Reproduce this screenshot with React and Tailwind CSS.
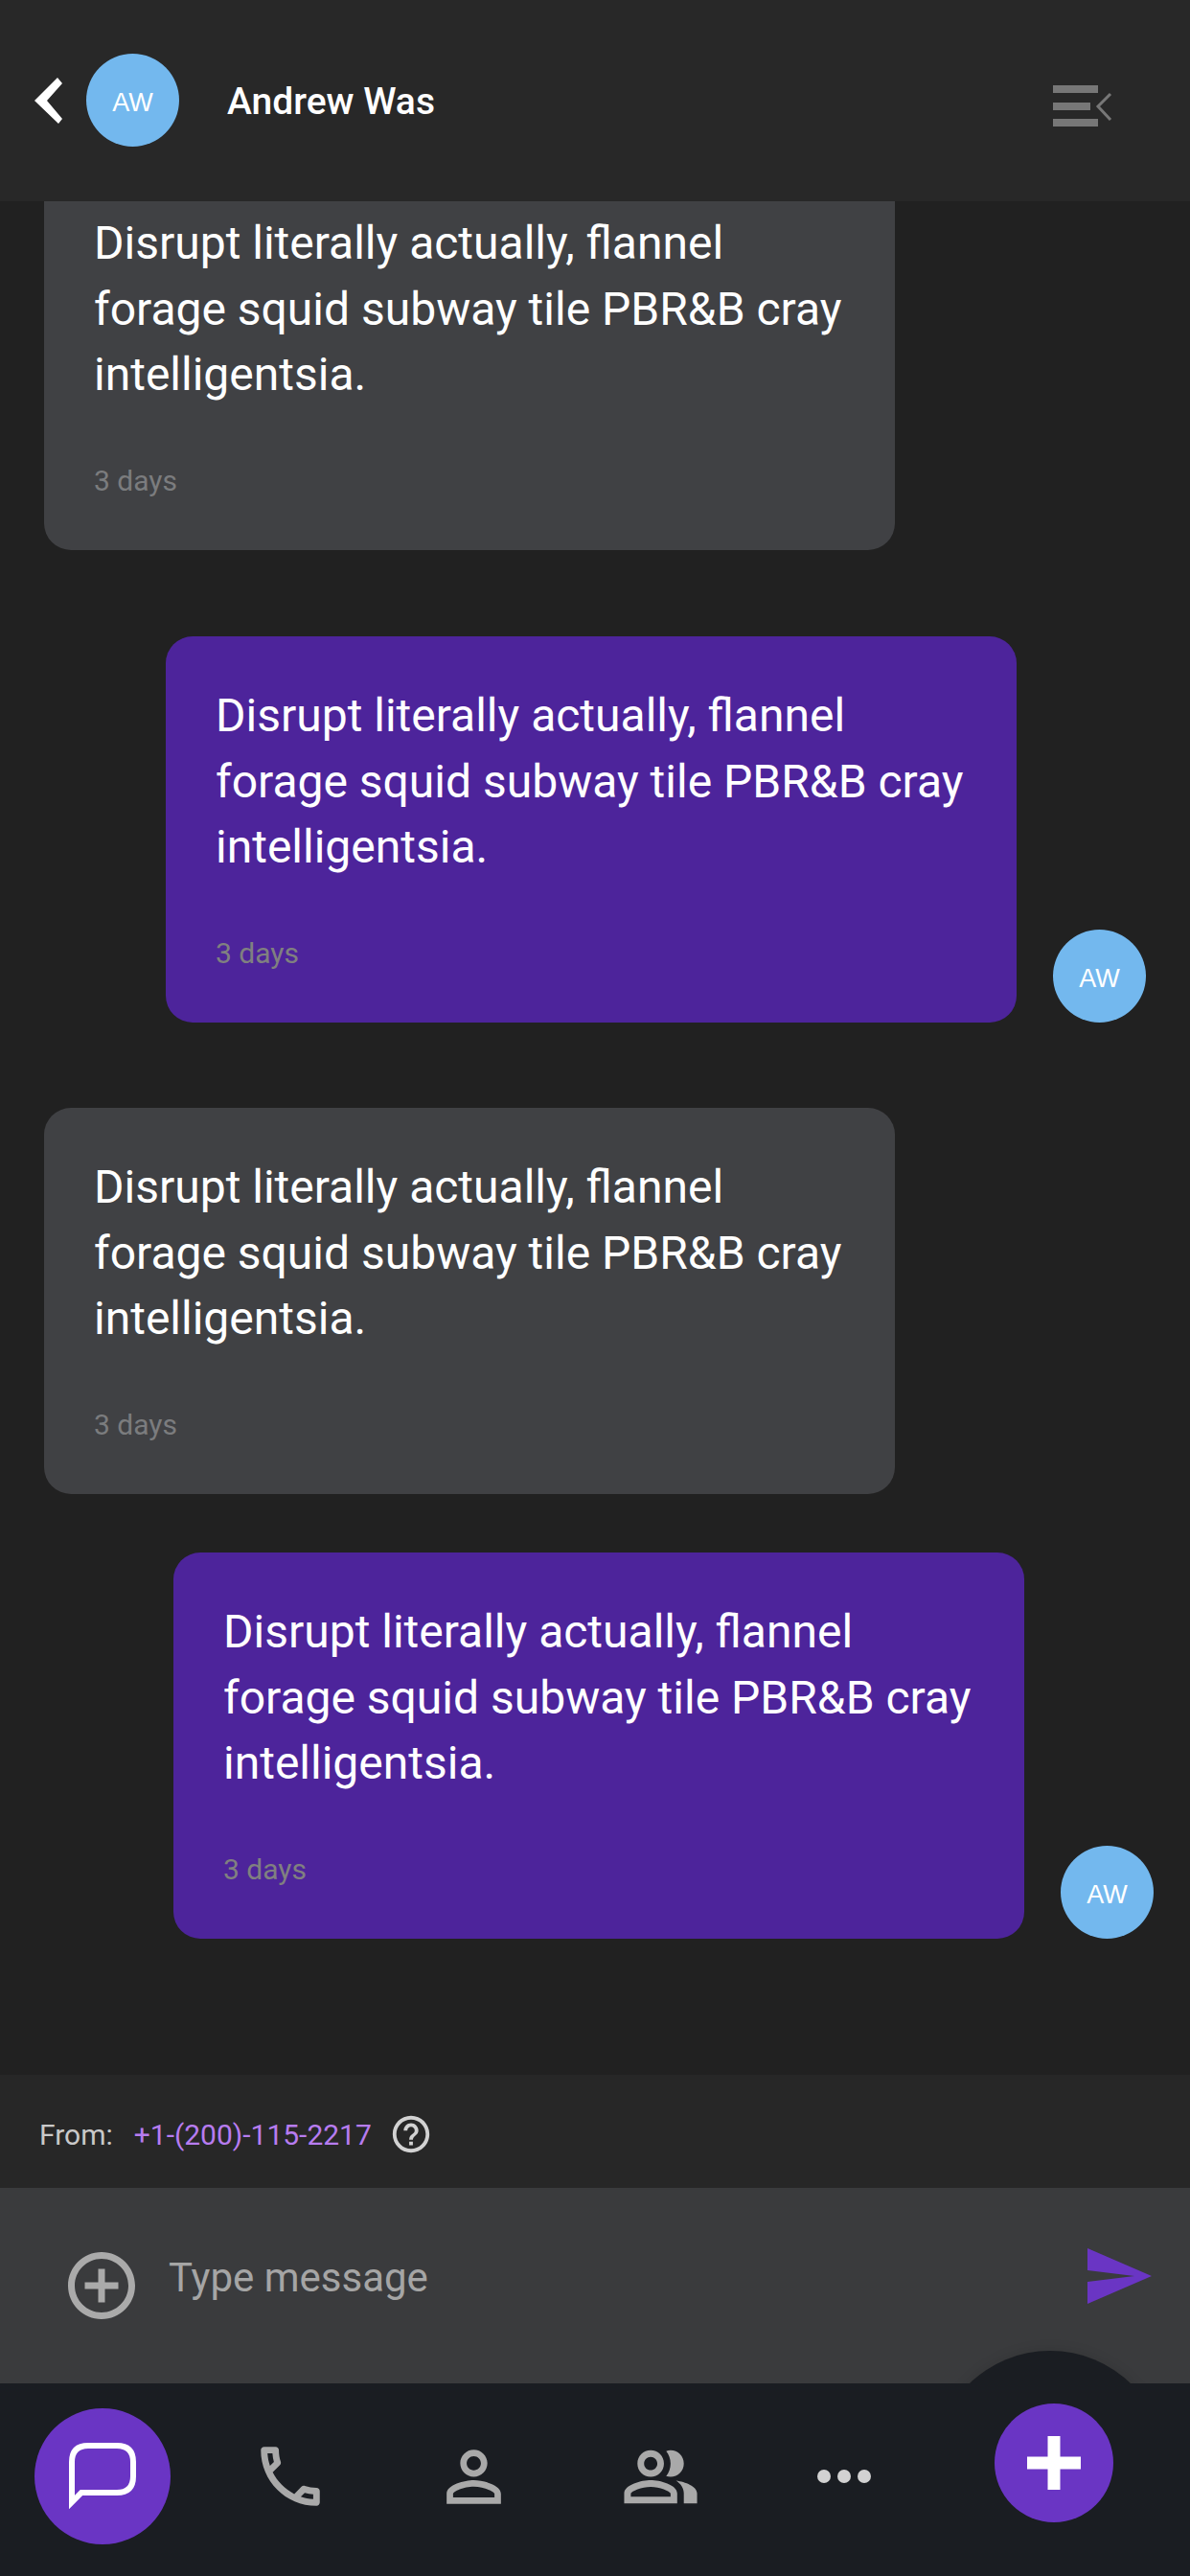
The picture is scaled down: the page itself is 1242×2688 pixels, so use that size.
import React from 'react';

const TEXT = 'Disrupt literally actually, flannel forage squid subway tile PBR&B cray intelligentsia.';

function Avatar({ className = '' }) {
    return (
        <div className={`w-[97px] h-[97px] shrink-0 rounded-full bg-[#73b8ee] flex items-center justify-center pt-[5px] text-white text-[27px] font-['Liberation_Sans',sans-serif] ${className}`}>
            AW
        </div>
    );
}

function Bubble({ mine }) {
    return (
        <div className={`w-[888px] h-[403px] shrink-0 rounded-[28px] pl-[52px] pr-[50px] pt-[49px] ${mine ? 'bg-[#4d249b]' : 'bg-[#404144]'}`}>
            <p className="text-white text-[48px] leading-[68.6px]">{TEXT}</p>
            <p className={`mt-[56px] text-[30px] leading-[40px] ${mine ? 'text-[#808080]' : 'text-[#7b7c7e]'}`}>3 days</p>
        </div>
    );
}

function NavIcon({ size, viewBox = '0 0 24 24', className = '', fill = '#a9a9a9', d }) {
    return (
        <svg width={size} height={size} viewBox={viewBox} fill={fill} className={`shrink-0 ${className}`}>
            <path d={d} />
        </svg>
    );
}

export default function App() {
    return (
        <div className="w-[1242px] h-[2688px] flex flex-col overflow-hidden bg-[#212121] font-['Roboto',sans-serif]">
            {/* Header */}
            <header className="h-[210px] shrink-0 bg-[#282828] flex items-center pb-[1px] z-10">
                <svg width="30" height="48" viewBox="0 0 30 48" className="ml-[36px] shrink-0">
                    <polygon points="24,0 29,6 13,24 29,43 25,48 0,24" fill="#fff" />
                </svg>
                <Avatar className="ml-[24px]" />
                <span className="ml-[50px] mt-[4px] text-white text-[39px] font-medium">Andrew Was</span>
                <svg width="62" height="44" viewBox="0 0 62 44" className="ml-auto mr-[81px] mt-[12px] shrink-0">
                    <rect x="0" y="0" width="47" height="8" fill="#777" />
                    <rect x="0" y="18" width="39" height="8" fill="#777" />
                    <rect x="0" y="35" width="47" height="8" fill="#777" />
                    <path d="M60 9 L47 22 L60 36" fill="none" stroke="#777" strokeWidth="3" />
                </svg>
            </header>

            {/* Messages */}
            <main className="flex-1 min-h-0 overflow-hidden flex flex-col">
                <div className="pl-[46px] mt-[-39px]"><Bubble /></div>
                <div className="pl-[173px] mt-[90px] flex items-end gap-[38px]"><Bubble mine /><Avatar /></div>
                <div className="pl-[46px] mt-[89px]"><Bubble /></div>
                <div className="pl-[181px] mt-[61px] flex items-end gap-[38px]"><Bubble mine /><Avatar /></div>
            </main>

            {/* From line */}
            <div className="h-[118px] shrink-0 bg-[#272727] flex items-center pl-[41px] pt-[6px] text-[30px]">
                <span className="text-[#c9c9c9]">From:</span>
                <span className="ml-[22px] text-[#b77cf0]">+1-(200)-115-2217</span>
                <NavIcon
                    size={46}
                    fill="#d2d2d2"
                    className="ml-[18px]"
                    d="M11 18h2v-2h-2v2zm1-16C6.48 2 2 6.48 2 12s4.48 10 10 10 10-4.48 10-10S17.52 2 12 2zm0 18c-4.41 0-8-3.59-8-8s3.59-8 8-8 8 3.59 8 8-3.59 8-8 8zm0-14c-2.21 0-4 1.79-4 4h2c0-1.1.9-2 2-2s2 .9 2 2c0 2-3 1.75-3 5h2c0-2.25 3-2.5 3-5 0-2.21-1.79-4-4-4z"
                />
            </div>

            {/* Input */}
            <div className="h-[204px] shrink-0 bg-[#3a3b3d] flex items-start">
                <NavIcon
                    size={84}
                    fill="#aaaaaa"
                    className="ml-[64px] mt-[60px]"
                    d="M13 7h-2v4H7v2h4v4h2v-4h4v-2h-4V7zm-1-5C6.48 2 2 6.48 2 12s4.48 10 10 10 10-4.48 10-10S17.52 2 12 2zm0 18c-4.41 0-8-3.59-8-8s3.59-8 8-8 8 3.59 8 8-3.59 8-8 8z"
                />
                <span className="ml-[28px] mt-[67px] text-[42px] leading-[54px] text-[#a5a5a5]">Type message</span>
                <svg width="68" height="58" viewBox="0 0 68 58" className="ml-auto mr-[39px] mt-[63px] shrink-0">
                    <path d="M0 0 L67 29 L0 58 V35 L49 29 L0 23 Z" fill="#6a35c4" />
                </svg>
            </div>

            {/* Bottom nav */}
            <nav className="relative h-[201px] shrink-0 bg-[#1a1d22] flex items-center pb-[7px]">
                <div className="absolute left-[975px] top-[-34px] w-[242px] h-[242px] rounded-full bg-[#1a1d22] shadow-[0_0_14px_rgba(0,0,0,0.12)]" />
                <div className="absolute inset-0 top-0 bg-[#1a1d22]" />
                <div className="relative ml-[36px] w-[142px] h-[142px] shrink-0 rounded-full bg-[#6a35c4] flex items-center justify-center">
                    <svg width="70" height="70" viewBox="0 0 70 70">
                        <path d="M3 62 V20 Q3 3 20 3 H50 Q67 3 67 20 V35 Q67 52 50 52 H13 Z" fill="none" stroke="#fff" strokeWidth="6" strokeLinejoin="miter" />
                    </svg>
                </div>
                <NavIcon
                    size={82}
                    className="relative ml-[84px]"
                    d="M6.54 5c.06.89.21 1.76.45 2.59l-1.2 1.2c-.41-1.2-.67-2.47-.76-3.79h1.51m9.86 12.02c.85.24 1.72.39 2.6.45v1.49c-1.32-.09-2.59-.35-3.8-.75l1.2-1.19M7.5 3H4c-.55 0-1 .45-1 1 0 9.39 7.61 17 17 17 .55 0 1-.45 1-1v-3.49c0-.55-.45-1-1-1-1.24 0-2.45-.2-3.57-.57-.1-.04-.21-.05-.31-.05-.26 0-.51.1-.71.29l-2.2 2.2c-2.83-1.45-5.15-3.76-6.59-6.59l2.2-2.2c.28-.28.36-.67.25-1.02C8.7 6.45 8.5 5.25 8.5 4c0-.55-.45-1-1-1z"
                />
                <NavIcon
                    size={85}
                    className="relative ml-[108px]"
                    d="M12 5.9c1.16 0 2.1.94 2.1 2.1s-.94 2.1-2.1 2.1S9.9 9.16 9.9 8s.94-2.1 2.1-2.1m0 9c2.97 0 6.1 1.46 6.1 2.1v1.1H5.9V17c0-.64 3.13-2.1 6.1-2.1M12 4C9.79 4 8 5.79 8 8s1.79 4 4 4 4-1.79 4-4-1.79-4-4-4zm0 9c-2.67 0-8 1.34-8 4v3h16v-3c0-2.66-5.33-4-8-4z"
                />
                <NavIcon
                    size={83}
                    className="relative ml-[111px]"
                    d="M16.67 13.13C18.04 14.06 19 15.32 19 17v3h4v-3c0-2.18-3.57-3.47-6.33-3.87zM15 12c2.21 0 4-1.79 4-4s-1.79-4-4-4c-.47 0-.91.1-1.33.24C14.5 5.27 15 6.58 15 8s-.5 2.73-1.33 3.76c.42.14.86.24 1.33.24zM9 12c2.21 0 4-1.79 4-4s-1.79-4-4-4-4 1.79-4 4 1.79 4 4 4zm0-6c1.1 0 2 .9 2 2s-.9 2-2 2-2-.9-2-2 .9-2 2-2zM9 13c-2.67 0-8 1.34-8 4v3h16v-3c0-2.66-5.33-4-8-4zm6 5H3v-.99C3.2 16.29 6.3 15 9 15s5.8 1.29 6 2v1z"
                />
                <div className="relative ml-[122px] flex gap-[7px]">
                    <span className="w-[14px] h-[14px] rounded-full bg-[#d2d2d2]" />
                    <span className="w-[14px] h-[14px] rounded-full bg-[#d2d2d2]" />
                    <span className="w-[14px] h-[14px] rounded-full bg-[#d2d2d2]" />
                </div>
                <button className="absolute left-[1038px] top-[21px] w-[124px] h-[124px] rounded-full bg-[#6a35c4] flex items-center justify-center">
                    <svg width="56" height="56" viewBox="0 0 56 56">
                        <path d="M21.5 0 H34.5 V21.5 H56 V34.5 H34.5 V56 H21.5 V34.5 H0 V21.5 H21.5 Z" fill="#fff" />
                    </svg>
                </button>
            </nav>
        </div>
    );
}
